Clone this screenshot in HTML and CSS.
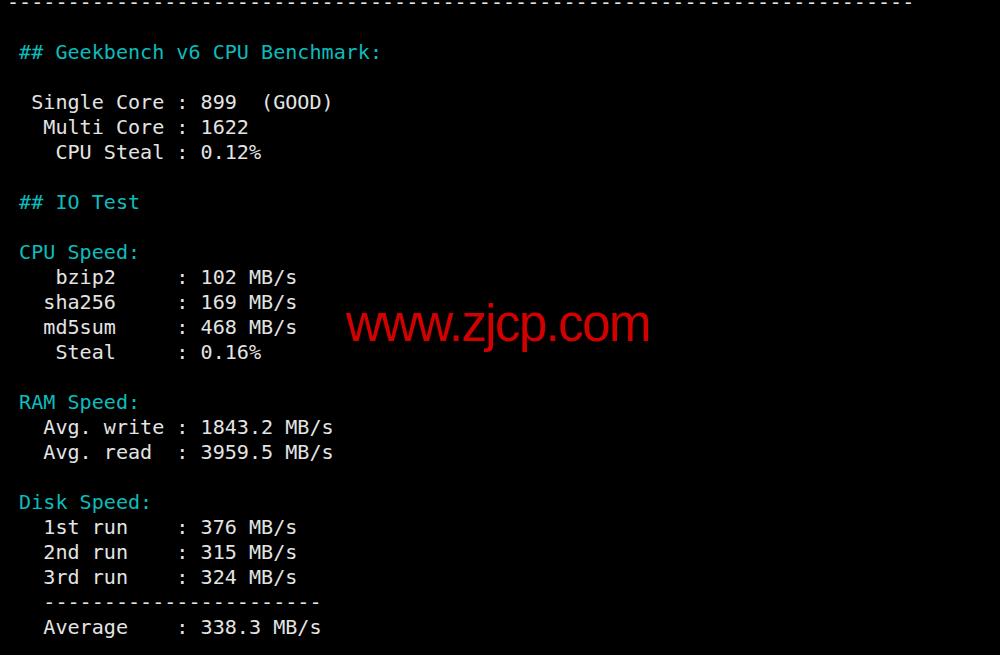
FILE: index.html
```html
<!DOCTYPE html>
<html lang="en">
<head>
<meta charset="utf-8">
<title>Geekbench v6 CPU Benchmark</title>
<link rel="stylesheet" href="styles.css">
</head>
<body>
<main class="terminal">
<pre class="output">---------------------------------------------------------------------------

<span class="cyan"> ## Geekbench v6 CPU Benchmark:</span>

  Single Core : 899  (GOOD)
   Multi Core : 1622
    CPU Steal : 0.12%

<span class="cyan"> ## IO Test</span>

<span class="cyan"> CPU Speed:</span>
    bzip2     : 102 MB/s
   sha256     : 169 MB/s
   md5sum     : 468 MB/s
    Steal     : 0.16%

<span class="cyan"> RAM Speed:</span>
   Avg. write : 1843.2 MB/s
   Avg. read  : 3959.5 MB/s

<span class="cyan"> Disk Speed:</span>
   1st run    : 376 MB/s
   2nd run    : 315 MB/s
   3rd run    : 324 MB/s
   -----------------------
   Average    : 338.3 MB/s</pre>
<div class="watermark">www.zjcp.com</div>
</main>
</body>
</html>
```

FILE: styles.css
```css
html, body {
  margin: 0;
  padding: 0;
  background: #000;
  width: 1000px;
  height: 655px;
  overflow: hidden;
}

.terminal {
  position: relative;
  width: 1000px;
  height: 655px;
  overflow: hidden;
  background: #000;
}

.output {
  margin: -10px 0 0 0;
  padding: 0 0 0 7px;
  font-family: "DejaVu Sans Mono", "Liberation Mono", monospace;
  font-size: 20.1px;
  line-height: 25px;
  color: #e4e4e4;
  white-space: pre;
}

.cyan {
  color: #0cbcbc;
}

.watermark {
  position: absolute;
  left: 346px;
  top: 298px;
  font-family: "Liberation Sans", Arial, sans-serif;
  font-size: 51px;
  line-height: 1;
  letter-spacing: -1.6px;
  color: #d30000;
  white-space: nowrap;
}
```
